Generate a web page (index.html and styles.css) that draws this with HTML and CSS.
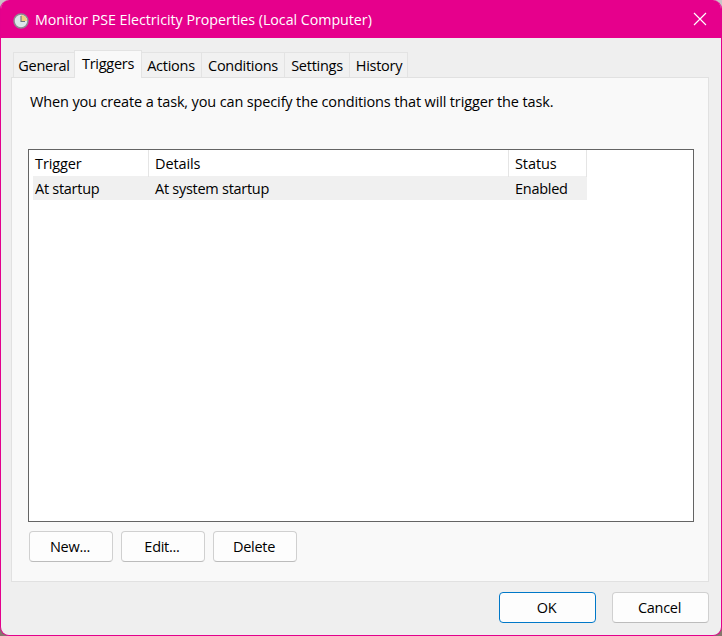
FILE: index.html
```html
<!DOCTYPE html>
<html lang="en">
<head>
<meta charset="utf-8">
<title>Monitor PSE Electricity Properties (Local Computer)</title>
<link rel="stylesheet" href="styles.css">
</head>
<body>
<main class="window">
  <header class="titlebar">
    <svg class="clock" width="16" height="16" viewBox="0 0 16 16">
      <circle cx="8" cy="8" r="7" fill="#dce6ea" stroke="#8d8b91" stroke-width="1.5"/>
      <path d="M8 8V2a6 6 0 0 1 6 6z" fill="#f3cf7d"/>
      <path d="M8 3v5.5h4" fill="none" stroke="#6b757c" stroke-width="1.1"/>
    </svg>
    <h1 class="title">Monitor PSE Electricity Properties (Local Computer)</h1>
    <svg class="close" width="14" height="14" viewBox="0 0 14 14"><path d="M1 1l12 12M13 1L1 13" stroke="#fff" stroke-width="1.15"/></svg>
  </header>
  <nav class="tabs">
    <div class="tab general">General</div>
    <div class="tab triggers active">Triggers</div>
    <div class="tab actions">Actions</div>
    <div class="tab conditions">Conditions</div>
    <div class="tab settings">Settings</div>
    <div class="tab history">History</div>
  </nav>
  <section class="panel">
    <p class="intro">When you create a task, you can specify the conditions that will trigger the task.</p>
    <div class="list">
      <div class="row head"><div class="cell">Trigger</div><div class="cell">Details</div><div class="cell">Status</div></div>
      <div class="row item"><div class="cell">At startup</div><div class="cell">At system startup</div><div class="cell">Enabled</div></div>
    </div>
    <div class="actions-row">
      <button class="btn">New...</button>
      <button class="btn">Edit...</button>
      <button class="btn">Delete</button>
    </div>
  </section>
  <footer class="footer">
    <button class="btn wide primary">OK</button>
    <button class="btn wide">Cancel</button>
  </footer>
</main>
</body>
</html>
```
FILE: styles.css
```css
* { box-sizing: border-box; }
body {
  margin: 0;
  background: linear-gradient(#c9c5c7 50%, #85776c 50%);
  font: 14.5px/20px "Open Sans", "Noto Sans", sans-serif;
  letter-spacing: -0.27px;
  color: #000;
}
.window {
  width: 722px;
  height: 636px;
  border: 1px solid #e3008c;
  border-top: 0;
  border-radius: 9px;
  overflow: hidden;
  background: #efefef;
}
.titlebar {
  height: 38px;
  padding: 2px 14px 0 12px;
  display: flex;
  align-items: center;
  background: #e6008c;
  color: #fff;
}
.title {
  flex: 1;
  margin: 0 0 0 6px;
  font-size: 14.25px;
  font-weight: 400;
  letter-spacing: -0.03px;
}
.clock { margin-top: 1px; }
.close { margin-top: -2px; }
.tabs {
  display: flex;
  align-items: flex-end;
  height: 39px;
  padding-left: 12px;
}
.tab {
  height: 25px;
  border: 1px solid #e3e3e3;
  border-width: 1px 1px 0 0;
  background: #f1f1f1;
  text-align: center;
  line-height: 25px;
  white-space: nowrap;
}
.general { width: 61px; border-left-width: 1px; border-right: 0; }
.triggers { width: 68px; }
.actions { width: 60px; padding-right: 1px; }
.conditions { width: 83px; }
.settings { width: 65px; }
.history { width: 58px; padding-left: 1px; }
.active {
  position: relative;
  height: 28px;
  margin-bottom: -1px;
  border-left-width: 1px;
  background: #f9f9f9;
  line-height: 26px;
}
.panel {
  width: 698px;
  height: 505px;
  margin-left: 10px;
  padding: 14px 0 0 16px;
  border: 1px solid #e1e1e1;
  background: #f9f9f9;
}
.intro {
  height: 20px;
  margin: 0 0 37px 2px;
  letter-spacing: -0.14px;
  white-space: nowrap;
}
.list {
  width: 666px;
  height: 373px;
  padding-left: 4px;
  border: 1px solid #646464;
  background: #fff;
}
.row { display: grid; grid-template-columns: 116px 360px 78px; width: 554px; }
.head { height: 26px; line-height: 27px; letter-spacing: -0.1px; }
.item { height: 24px; line-height: 25px; background: #f0f0f0; }
.cell { padding-left: 6px; white-space: nowrap; }
.cell:first-child { padding-left: 2px; }
.head .cell { border-right: 1px solid #e5e5e5; }
.actions-row { display: flex; gap: 8px; padding: 9px 0 0 1px; }
.btn {
  width: 84px;
  height: 31px;
  padding: 0 2px 0 0;
  border: 1px solid #d0d0d0;
  border-bottom-color: #bcbcbc;
  border-radius: 4px;
  background: #fdfdfd;
  color: #000;
  font: inherit;
  letter-spacing: inherit;
}
.wide { width: 97px; }
.primary { border-color: #0078c8; }
.footer { display: flex; justify-content: flex-end; gap: 16px; padding: 10px 12px 0 0; }
```
